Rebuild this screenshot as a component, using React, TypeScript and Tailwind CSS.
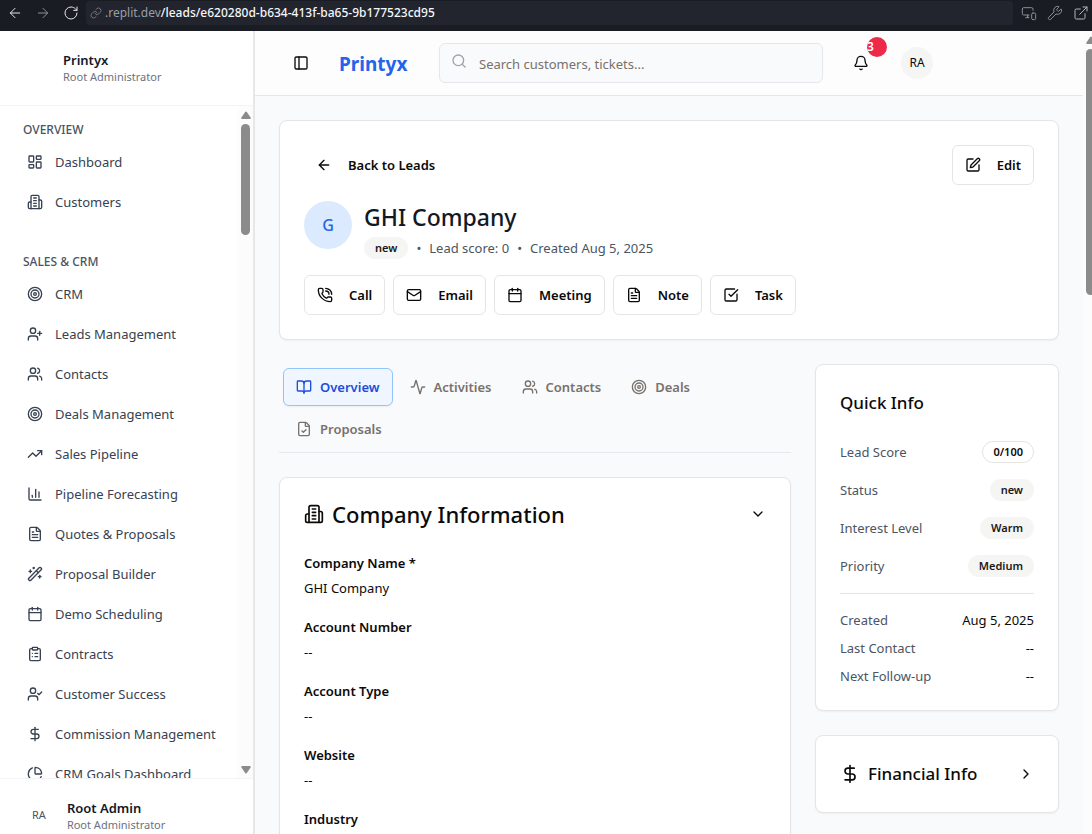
import React from 'react';
import {
  Activity,
  ArrowLeft,
  ArrowRight,
  Bell,
  BookOpen,
  Calendar,
  ChartColumn,
  ChartPie,
  ChevronDown,
  ChevronRight,
  ClipboardList,
  DollarSign,
  ExternalLink,
  FileCheck,
  FileText,
  LayoutDashboard,
  Link as LinkIcon,
  Mail,
  MonitorSmartphone,
  PanelLeft,
  PhoneCall,
  RotateCw,
  Search,
  SquareCheckBig,
  SquarePen,
  Target,
  TrendingUp,
  UserCheck,
  UserPlus,
  Users,
  WandSparkles,
  Wrench,
} from 'lucide-react';

type IconType = React.ComponentType<{ className?: string; strokeWidth?: number }>;

function Building({ className }: { className?: string }) {
  return (
    <svg
      viewBox="0 0 24 24"
      fill="none"
      stroke="currentColor"
      strokeWidth={2}
      strokeLinecap="round"
      strokeLinejoin="round"
      className={className}
      aria-hidden="true"
    >
      <path d="M6 22V4a2 2 0 0 1 2-2h8a2 2 0 0 1 2 2v18Z" />
      <path d="M6 12H4a2 2 0 0 0-2 2v6a2 2 0 0 0 2 2h2" />
      <path d="M18 9h2a2 2 0 0 1 2 2v9a2 2 0 0 1-2 2h-2" />
      <path d="M10 6h4" />
      <path d="M10 10h4" />
      <path d="M10 14h4" />
      <path d="M10 18h4" />
    </svg>
  );
}

const sections: { title: string; items: { label: string; icon: IconType }[] }[] = [
  {
    title: 'OVERVIEW',
    items: [
      { label: 'Dashboard', icon: LayoutDashboard },
      { label: 'Customers', icon: Building },
    ],
  },
  {
    title: 'SALES & CRM',
    items: [
      { label: 'CRM', icon: Target },
      { label: 'Leads Management', icon: UserPlus },
      { label: 'Contacts', icon: Users },
      { label: 'Deals Management', icon: Target },
      { label: 'Sales Pipeline', icon: TrendingUp },
      { label: 'Pipeline Forecasting', icon: ChartColumn },
      { label: 'Quotes & Proposals', icon: FileText },
      { label: 'Proposal Builder', icon: WandSparkles },
      { label: 'Demo Scheduling', icon: Calendar },
      { label: 'Contracts', icon: ClipboardList },
      { label: 'Customer Success', icon: UserCheck },
      { label: 'Commission Management', icon: DollarSign },
      { label: 'CRM Goals Dashboard', icon: ChartPie },
    ],
  },
];

const actions: { label: string; icon: IconType }[] = [
  { label: 'Call', icon: PhoneCall },
  { label: 'Email', icon: Mail },
  { label: 'Meeting', icon: Calendar },
  { label: 'Note', icon: FileText },
  { label: 'Task', icon: SquareCheckBig },
];

const tabs: { label: string; icon: IconType }[] = [
  { label: 'Overview', icon: BookOpen },
  { label: 'Activities', icon: Activity },
  { label: 'Contacts', icon: Users },
  { label: 'Deals', icon: Target },
  { label: 'Proposals', icon: FileCheck },
];

const fields = [
  { label: 'Company Name *', value: 'GHI Company' },
  { label: 'Account Number', value: '--' },
  { label: 'Account Type', value: '--' },
  { label: 'Website', value: '--' },
  { label: 'Industry', value: '--' },
];

const badges = [
  { label: 'Lead Score', value: '0/100', outline: true },
  { label: 'Status', value: 'new', outline: false },
  { label: 'Interest Level', value: 'Warm', outline: false },
  { label: 'Priority', value: 'Medium', outline: false },
];

const dates = [
  { label: 'Created', value: 'Aug 5, 2025' },
  { label: 'Last Contact', value: '--' },
  { label: 'Next Follow-up', value: '--' },
];

function Badge({ children, outline = false }: { children: React.ReactNode; outline?: boolean }) {
  return (
    <span
      className={
        outline
          ? 'inline-flex h-[22px] items-center rounded-full border border-[#e7e5e4] px-2.5 text-[11px] font-semibold text-[#0c0a09]'
          : 'inline-flex h-[22px] items-center rounded-full border border-transparent bg-[#f5f5f4] px-2.5 text-[11px] font-semibold text-[#1c1917]'
      }
    >
      {children}
    </span>
  );
}

function OutlineButton({ label, icon: Icon }: { label: string; icon: IconType }) {
  return (
    <button
      type="button"
      className="flex h-10 items-center gap-4 rounded-md border border-[#e5e5e5] bg-white px-3 text-[13px] leading-5 font-semibold text-[#0c0a09]"
    >
      <Icon className="size-4" />
      {label}
    </button>
  );
}

function BrowserBar() {
  return (
    <div className="flex h-[31px] shrink-0 items-start bg-[#1a1c23] pt-px">
      <div className="flex h-6 w-[86px] shrink-0 items-center justify-between pl-[7px] pr-[7px]">
        <button type="button" aria-label="Back" className="text-[#e4e5e8]">
          <ArrowLeft className="size-4" strokeWidth={1.5} />
        </button>
        <button type="button" aria-label="Forward" className="text-[#8b8e96]">
          <ArrowRight className="size-4" strokeWidth={1.5} />
        </button>
        <button type="button" aria-label="Reload" className="text-[#e4e5e8]">
          <RotateCw className="size-4" strokeWidth={1.5} />
        </button>
      </div>
      <div className="flex h-6 min-w-0 flex-1 items-center gap-[3px] rounded bg-[#22252e] pl-1 text-xs">
        <LinkIcon className="size-3 shrink-0 text-[#8b8e96]" strokeWidth={1.5} />
        <span className="truncate text-[#f5f6f8]">
          <span className="text-[#9a9da6]">.replit.dev</span>
          <span className="font-medium">/leads/e620280d-b634-413f-ba65-9b177523cd95</span>
        </span>
      </div>
      <div className="flex h-6 shrink-0 items-center gap-[10px] pl-2 pr-[3px] text-[#8b8e96]">
        <button type="button" aria-label="Device preview">
          <MonitorSmartphone className="size-4" strokeWidth={1.5} />
        </button>
        <button type="button" aria-label="Developer tools">
          <Wrench className="size-4" strokeWidth={1.5} />
        </button>
        <button type="button" aria-label="Open in new tab" className="text-[#b4b7be]">
          <ExternalLink className="size-4" strokeWidth={1.5} />
        </button>
      </div>
    </div>
  );
}

function Sidebar() {
  return (
    <aside className="flex w-[255px] shrink-0 flex-col border-r-2 border-[#e5e7eb] bg-white">
      <div className="flex h-[75px] shrink-0 flex-col justify-center border-b border-[#f3f4f6] pl-[63px]">
        <p className="text-[13px] leading-[18px] font-semibold text-[#111827]">Printyx</p>
        <p className="text-[11px] leading-4 text-[#6b7280]">Root Administrator</p>
      </div>
      <div className="flex min-h-0 flex-1">
        <nav className="flex min-w-0 flex-1 flex-col gap-7 overflow-hidden pl-[23px] pt-[10px]">
          {sections.map((section) => (
            <section key={section.title}>
              <h2 className="flex h-7 items-center text-xs font-medium text-[#4b5563]">{section.title}</h2>
              <ul className="flex flex-col gap-1">
                {section.items.map(({ label, icon: Icon }) => (
                  <li key={label}>
                    <a
                      href="#"
                      className="flex h-9 items-center gap-3 whitespace-nowrap pl-1 text-[13px] leading-5 text-[#374151]"
                    >
                      <Icon className="size-4 shrink-0" />
                      {label}
                    </a>
                  </li>
                ))}
              </ul>
            </section>
          ))}
        </nav>
        <div aria-hidden="true" className="flex w-[15px] shrink-0 flex-col items-center bg-[#fcfcfc] py-1">
          <svg viewBox="0 0 10 8" className="mt-px h-2 w-[10px] shrink-0 fill-[#8b8b8b]">
            <path d="M4.2 1Q5 0 5.8 1L9.6 6.5Q10 8 9 8H1Q0 8 .4 6.5Z" />
          </svg>
          <div className="mt-[5px] h-[111px] w-[9px] rounded-full bg-[#8b8b8b]" />
          <svg viewBox="0 0 10 8" className="mt-auto h-2 w-[10px] shrink-0 fill-[#8b8b8b]">
            <path d="M4.2 7Q5 8 5.8 7L9.6 1.5Q10 0 9 0H1Q0 0 .4 1.5Z" />
          </svg>
        </div>
      </div>
      <div className="flex h-14 shrink-0 items-center gap-[21px] border-t border-[#f3f4f6] pl-8 pt-[18px]">
        <span className="text-[11px] text-[#4b5563]">RA</span>
        <div>
          <p className="text-[13px] leading-[18px] font-semibold text-[#111827]">Root Admin</p>
          <p className="text-[11px] leading-4 text-[#6b7280]">Root Administrator</p>
        </div>
      </div>
    </aside>
  );
}

function Header() {
  return (
    <header className="flex h-[65px] shrink-0 items-center border-b border-[#e5e7eb] bg-[#fdfdfd] pl-[38px]">
      <button type="button" aria-label="Toggle sidebar" className="text-[#0c0a09]">
        <PanelLeft className="size-4" />
      </button>
      <span className="ml-[30px] w-[68px] pt-0.5 text-[19px] font-bold text-[#2563eb]">Printyx</span>
      <div className="ml-8 flex h-10 w-96 items-center gap-3 rounded-md border border-[#e5e7eb] bg-[#f9fafb] px-[11px]">
        <Search className="mb-1 size-4 shrink-0 text-[#9ca3af]" />
        <input
          type="text"
          aria-label="Search customers and tickets"
          placeholder="Search customers, tickets..."
          className="h-full min-w-0 flex-1 bg-transparent pt-0.5 text-[13px] leading-5 outline-none placeholder:text-[#78716c]"
        />
      </div>
      <button type="button" aria-label="Notifications" className="relative ml-[30px] text-[#0c0a09]">
        <Bell className="size-4" />
        <span className="absolute -top-[18px] left-[14px] flex size-5 items-center rounded-full bg-[#ed2b48] text-xs font-semibold text-white">
          3
        </span>
      </button>
      <button
        type="button"
        aria-label="Account"
        className="ml-8 flex size-8 items-center justify-center rounded-full bg-[#f5f5f4] text-xs text-[#0c0a09]"
      >
        RA
      </button>
    </header>
  );
}

function LeadHeader() {
  return (
    <section className="rounded-lg border border-[#e5e5e5] bg-white p-6 shadow-xs">
      <div className="flex items-center justify-between">
        <button
          type="button"
          className="flex h-10 items-center gap-4 px-3 text-[13px] leading-5 font-semibold text-[#0c0a09]"
        >
          <ArrowLeft className="size-4" />
          Back to Leads
        </button>
        <OutlineButton label="Edit" icon={SquarePen} />
      </div>
      <div className="mt-4 flex items-start gap-3">
        <div className="flex size-12 shrink-0 items-center justify-center rounded-full bg-[#dbeafe] text-base font-medium text-[#2563eb]">
          G
        </div>
        <div>
          <h1 className="text-[23px] leading-8 font-medium text-[#111827]">GHI Company</h1>
          <div className="mt-1 flex items-center gap-2 text-[13px] leading-5 text-[#4b5563]">
            <Badge>new</Badge>
            <span>•</span>
            <span>Lead score: 0</span>
            <span>•</span>
            <span>Created Aug 5, 2025</span>
          </div>
        </div>
      </div>
      <div className="mt-4 flex flex-wrap gap-2">
        {actions.map((action) => (
          <OutlineButton key={action.label} {...action} />
        ))}
      </div>
    </section>
  );
}

function Tabs() {
  return (
    <div role="tablist" className="flex flex-wrap gap-1 border-b border-[#e5e7eb] p-1">
      {tabs.map(({ label, icon: Icon }, index) => (
        <button
          key={label}
          type="button"
          role="tab"
          aria-selected={index === 0}
          className={
            index === 0
              ? 'flex h-[38px] items-center gap-2 rounded-md border border-[#93c5fd] bg-[#eff6ff] px-3 text-[13px] leading-5 font-semibold text-[#1d4ed8] shadow-xs'
              : 'flex h-[38px] items-center gap-2 rounded-md border border-transparent px-3 text-[13px] leading-5 font-semibold text-[#78716c]'
          }
        >
          <Icon className="size-4" />
          {label}
        </button>
      ))}
    </div>
  );
}

function CompanyInformation() {
  return (
    <section className="rounded-lg border border-[#e5e5e5] bg-white p-6 shadow-xs">
      <div className="flex h-6 items-center justify-between text-[#0c0a09]">
        <h2 className="flex items-center gap-2 text-[22px] leading-6 font-medium">
          <Building className="size-5" />
          Company Information
        </h2>
        <button type="button" aria-label="Collapse company information">
          <ChevronDown className="size-4" />
        </button>
      </div>
      <dl className="mt-[27px] flex flex-col gap-[19px] text-[13px] leading-5 text-[#0c0a09]">
        {fields.map(({ label, value }) => (
          <div key={label} className="flex flex-col gap-[5px]">
            <dt className="font-semibold">{label}</dt>
            <dd>{value}</dd>
          </div>
        ))}
      </dl>
    </section>
  );
}

function QuickInfo() {
  return (
    <section className="rounded-lg border border-[#e5e5e5] bg-white p-6 shadow-xs">
      <h2 className="text-[17px] leading-7 font-medium text-[#0c0a09]">Quick Info</h2>
      <dl className="mt-6 flex flex-col gap-4 text-[13px] leading-5">
        {badges.map(({ label, value, outline }) => (
          <div key={label} className="flex h-[22px] items-center justify-between">
            <dt className="text-[#4b5563]">{label}</dt>
            <dd className="flex">
              <Badge outline={outline}>{value}</Badge>
            </dd>
          </div>
        ))}
      </dl>
      <dl className="mt-4 flex flex-col gap-2 border-t border-[#e5e5e5] pt-4 text-[13px] leading-5">
        {dates.map(({ label, value }) => (
          <div key={label} className="flex items-center justify-between">
            <dt className="text-[#4b5563]">{label}</dt>
            <dd className="text-[#0c0a09]">{value}</dd>
          </div>
        ))}
      </dl>
    </section>
  );
}

function FinancialInfo() {
  return (
    <section className="rounded-lg border border-[#e5e5e5] bg-white p-6 text-[#0c0a09] shadow-xs">
      <h2 className="text-[17px] leading-7 font-medium">
        <button type="button" aria-expanded="false" className="flex w-full items-center gap-2">
          <DollarSign className="size-5" />
          Financial Info
          <ChevronRight className="ml-auto size-4" />
        </button>
      </h2>
    </section>
  );
}

export default function App() {
  return (
    <div className="flex h-screen flex-col overflow-hidden bg-[#f9fafb] font-['Noto_Sans','Open_Sans',sans-serif]">
      <BrowserBar />
      <div className="flex min-h-0 flex-1">
        <Sidebar />
        <div className="flex min-w-0 flex-1 flex-col">
          <Header />
          <main className="min-h-0 flex-1 overflow-hidden p-6">
            <LeadHeader />
            <div className="mt-6 grid grid-cols-3 items-start gap-6">
              <div className="col-span-2 flex min-w-0 flex-col gap-6">
                <Tabs />
                <CompanyInformation />
              </div>
              <div className="flex min-w-0 flex-col gap-6">
                <QuickInfo />
                <FinancialInfo />
              </div>
            </div>
          </main>
        </div>
        <div aria-hidden="true" className="flex w-[9px] shrink-0 flex-col overflow-hidden bg-[#fcfcfc] pl-[3px] pt-[5px]">
          <svg viewBox="0 0 10 8" className="h-2 w-[10px] shrink-0 fill-[#8b8b8b]">
            <path d="M4.2 1Q5 0 5.8 1L9.6 6.5Q10 8 9 8H1Q0 8 .4 6.5Z" />
          </svg>
          <div className="mt-[5px] h-[246px] w-[9px] shrink-0 rounded-full bg-[#8b8b8b]" />
        </div>
      </div>
    </div>
  );
}
